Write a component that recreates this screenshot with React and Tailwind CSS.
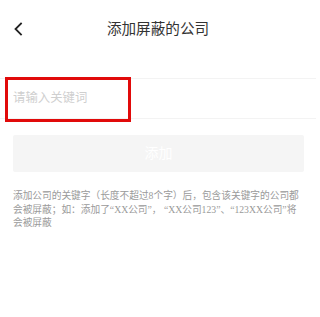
export default function App() {
  return (
    <div
      className="w-[316px] h-[317px] bg-white overflow-hidden"
      style={{ fontFamily: '"Liberation Sans", "Noto Sans CJK SC", sans-serif' }}
    >
      <header className="relative h-[58px] flex items-center justify-center">
        <button className="absolute left-[12px] top-[22px] w-[12px] h-[14px] flex items-center justify-center">
          <svg width="10" height="14" viewBox="0 0 10 14" fill="none">
            <path d="M8 1.5L2.5 7L8 12.5" stroke="#222" strokeWidth="1.8" strokeLinecap="square" />
          </svg>
        </button>
        <h1 className="text-[14.6px] text-[#333] mt-[1px]">添加屏蔽的公司</h1>
      </header>

      <div className="relative mt-[20px] h-[41px] border-y border-[#f3f3f3] px-[13px] flex items-center">
        <input
          className="w-full text-[12.4px] text-[#333] outline-none bg-transparent placeholder:text-[#cfcfcf]"
          placeholder="请输入关键词"
        />
        {/* annotation box */}
        <div className="absolute left-[5px] top-[-2px] w-[126px] h-[45px] border-[3px] border-[#e10a0a] pointer-events-none"></div>
      </div>

      <button className="mt-[16px] mx-[13px] w-[291px] h-[37px] bg-[#f5f5f5] rounded-[2px] text-white text-[14px] flex items-center justify-center">
        添加
      </button>

      <p
        className="mt-[17px] px-[13px] text-[9.7px] leading-[13.5px] text-[#9a9a9a]"
        style={{ fontFamily: '"Liberation Serif", "Noto Sans CJK SC", serif' }}
      >
        添加公司的关键字（长度不超过8个字）后，包含该关键字的公司都会被屏蔽；如：添加了“XX公司”， “XX公司123”、“123XX公司”将会被屏蔽
      </p>
    </div>
  );
}
